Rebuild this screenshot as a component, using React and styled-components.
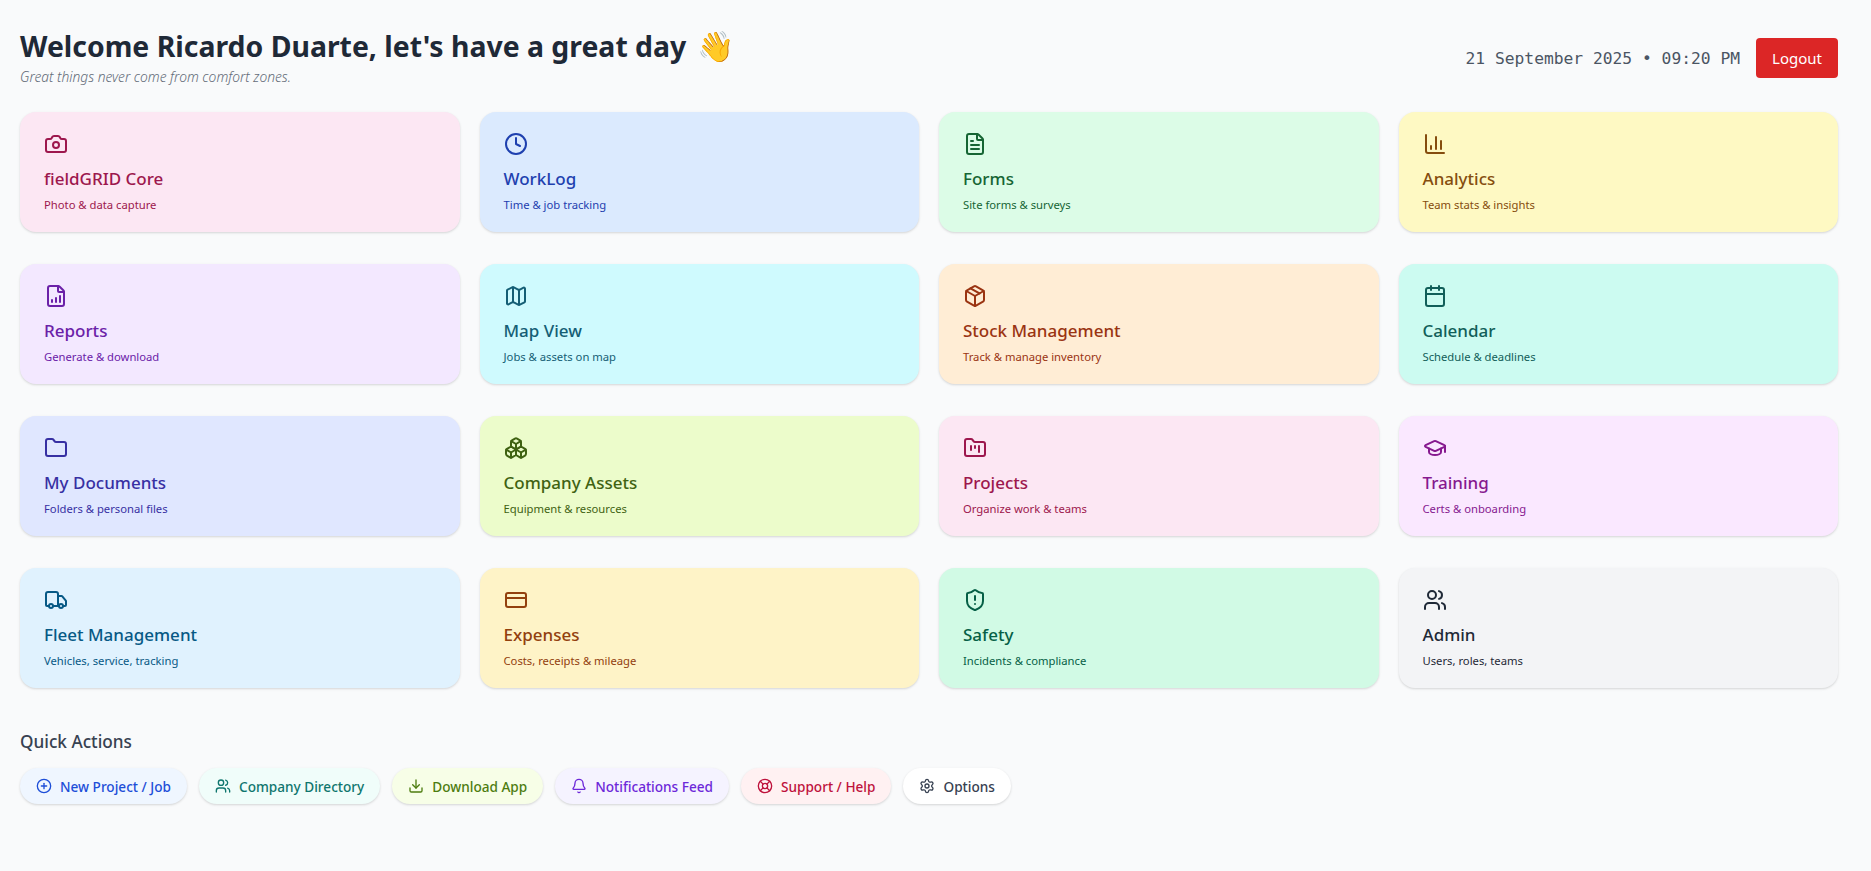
import React from 'react'
import styled, { createGlobalStyle } from 'styled-components'
import {
  Camera, Clock, FileText, BarChart3, FileBarChart, Map, Package, Calendar,
  Folder, Boxes, FolderKanban, GraduationCap, Truck, CreditCard, ShieldAlert, Users,
  PlusCircle, Download, Bell, LifeBuoy, Settings
} from 'lucide-react'

const GlobalStyle = createGlobalStyle`
  html, body {
    margin: 0;
    padding: 0;
    background: #f9fafb;
  }
  body {
    font-family: "Noto Sans", "Open Sans", sans-serif;
  }
`

const Page = styled.div`
  min-height: 871px;
  box-sizing: border-box;
  padding: 24px 33px 0 20px;
`

const Header = styled.header`
  display: flex;
  justify-content: space-between;
  align-items: center;
  height: 64px;
  margin-bottom: 24px;
`

const Title = styled.h1`
  margin: 2px 0 0;
  font-size: 28.4px;
  line-height: 36px;
  font-weight: 700;
  color: #1f2937;
`

const Wave = styled.span`
  margin-left: 3px;
  font-size: 30px;
`

const Tagline = styled.p`
  margin: 4px 0 0;
  font-size: 13.8px;
  line-height: 18px;
  font-style: italic;
  font-weight: 300;
  color: #636b78;
`

const HeaderRight = styled.div`
  display: flex;
  align-items: center;
  gap: 16px;
  padding-top: 4px;
`

const Clockline = styled.span`
  font-family: "DejaVu Sans Mono", monospace;
  font-size: 16.3px;
  color: #4b5563;
`

const LogoutButton = styled.button`
  border: 0;
  border-radius: 4px;
  background: #dc2626;
  color: #fff;
  font-family: inherit;
  font-size: 15px;
  width: 82px;
  height: 40px;
`

const CardGrid = styled.div`
  display: grid;
  grid-template-columns: repeat(4, 1fr);
  column-gap: 20px;
  row-gap: 32px;
`

const Card = styled.div`
  box-sizing: border-box;
  height: 120px;
  padding: 20px 24px;
  border-radius: 16px;
  background: ${({ bg }) => bg};
  color: ${({ fg }) => fg};
  box-shadow: 0 1px 3px rgba(0, 0, 0, 0.1), 0 1px 2px rgba(0, 0, 0, 0.06);
`

const CardTitle = styled.div`
  margin-top: 4px;
  font-size: 17px;
  line-height: 28px;
  font-weight: 550;
`

const CardText = styled.div`
  margin-top: 4px;
  font-size: 11.25px;
  line-height: 16px;
`

const SectionTitle = styled.h2`
  margin: 40px 0 12px;
  font-size: 17.2px;
  line-height: 28px;
  font-weight: 550;
  color: #374151;
`

const ActionRow = styled.div`
  display: flex;
  gap: 12px;
`

const ActionPill = styled.button`
  display: flex;
  align-items: center;
  gap: 8px;
  height: 36px;
  padding: 0 16px;
  border: 0;
  border-radius: 18px;
  background: ${({ bg }) => bg};
  color: ${({ fg }) => fg};
  font-family: inherit;
  font-size: 13.6px;
  font-weight: 550;
  box-shadow: 0 1px 3px rgba(0, 0, 0, 0.1), 0 1px 2px rgba(0, 0, 0, 0.06);
`

const cards = [
  { icon: Camera, title: 'fieldGRID Core', text: 'Photo & data capture', bg: '#fce7f3', fg: '#9d174d' },
  { icon: Clock, title: 'WorkLog', text: 'Time & job tracking', bg: '#dbeafe', fg: '#1e40af' },
  { icon: FileText, title: 'Forms', text: 'Site forms & surveys', bg: '#dcfce7', fg: '#166534' },
  { icon: BarChart3, title: 'Analytics', text: 'Team stats & insights', bg: '#fef9c3', fg: '#854d0e' },
  { icon: FileBarChart, title: 'Reports', text: 'Generate & download', bg: '#f3e8ff', fg: '#6b21a8' },
  { icon: Map, title: 'Map View', text: 'Jobs & assets on map', bg: '#cffafe', fg: '#155e75' },
  { icon: Package, title: 'Stock Management', text: 'Track & manage inventory', bg: '#ffedd5', fg: '#9a3412' },
  { icon: Calendar, title: 'Calendar', text: 'Schedule & deadlines', bg: '#ccfbf1', fg: '#115e59' },
  { icon: Folder, title: 'My Documents', text: 'Folders & personal files', bg: '#e0e7ff', fg: '#3730a3' },
  { icon: Boxes, title: 'Company Assets', text: 'Equipment & resources', bg: '#ecfccb', fg: '#3f6212' },
  { icon: FolderKanban, title: 'Projects', text: 'Organize work & teams', bg: '#fce7f3', fg: '#9d174d' },
  { icon: GraduationCap, title: 'Training', text: 'Certs & onboarding', bg: '#fae8ff', fg: '#86198f' },
  { icon: Truck, title: 'Fleet Management', text: 'Vehicles, service, tracking', bg: '#e0f2fe', fg: '#075985' },
  { icon: CreditCard, title: 'Expenses', text: 'Costs, receipts & mileage', bg: '#fef3c7', fg: '#92400e' },
  { icon: ShieldAlert, title: 'Safety', text: 'Incidents & compliance', bg: '#d1fae5', fg: '#065f46' },
  { icon: Users, title: 'Admin', text: 'Users, roles, teams', bg: '#f3f4f6', fg: '#1f2937' }
]

const actions = [
  { icon: PlusCircle, label: 'New Project / Job', bg: '#eff6ff', fg: '#1d4ed8' },
  { icon: Users, label: 'Company Directory', bg: '#f0fdfa', fg: '#0f766e' },
  { icon: Download, label: 'Download App', bg: '#f7fee7', fg: '#4d7c0f' },
  { icon: Bell, label: 'Notifications Feed', bg: '#f5f3ff', fg: '#6d28d9' },
  { icon: LifeBuoy, label: 'Support / Help', bg: '#fff1f2', fg: '#be123c' },
  { icon: Settings, label: 'Options', bg: '#ffffff', fg: '#374151' }
]

const App = () => (
  <Page>
    <GlobalStyle />
    <Header>
      <div>
        <Title>Welcome Ricardo Duarte, let's have a great day <Wave>👋</Wave></Title>
        <Tagline>Great things never come from comfort zones.</Tagline>
      </div>
      <HeaderRight>
        <Clockline>21 September 2025 • 09:20 PM</Clockline>
        <LogoutButton>Logout</LogoutButton>
      </HeaderRight>
    </Header>
    <CardGrid>
      {cards.map(({ icon: Icon, title, text, bg, fg }) => (
        <Card key={title} bg={bg} fg={fg}>
          <Icon size={24} strokeWidth={2} />
          <CardTitle>{title}</CardTitle>
          <CardText>{text}</CardText>
        </Card>
      ))}
    </CardGrid>
    <SectionTitle>Quick Actions</SectionTitle>
    <ActionRow>
      {actions.map(({ icon: Icon, label, bg, fg }) => (
        <ActionPill key={label} bg={bg} fg={fg}>
          <Icon size={16} />
          {label}
        </ActionPill>
      ))}
    </ActionRow>
  </Page>
)

export default App
